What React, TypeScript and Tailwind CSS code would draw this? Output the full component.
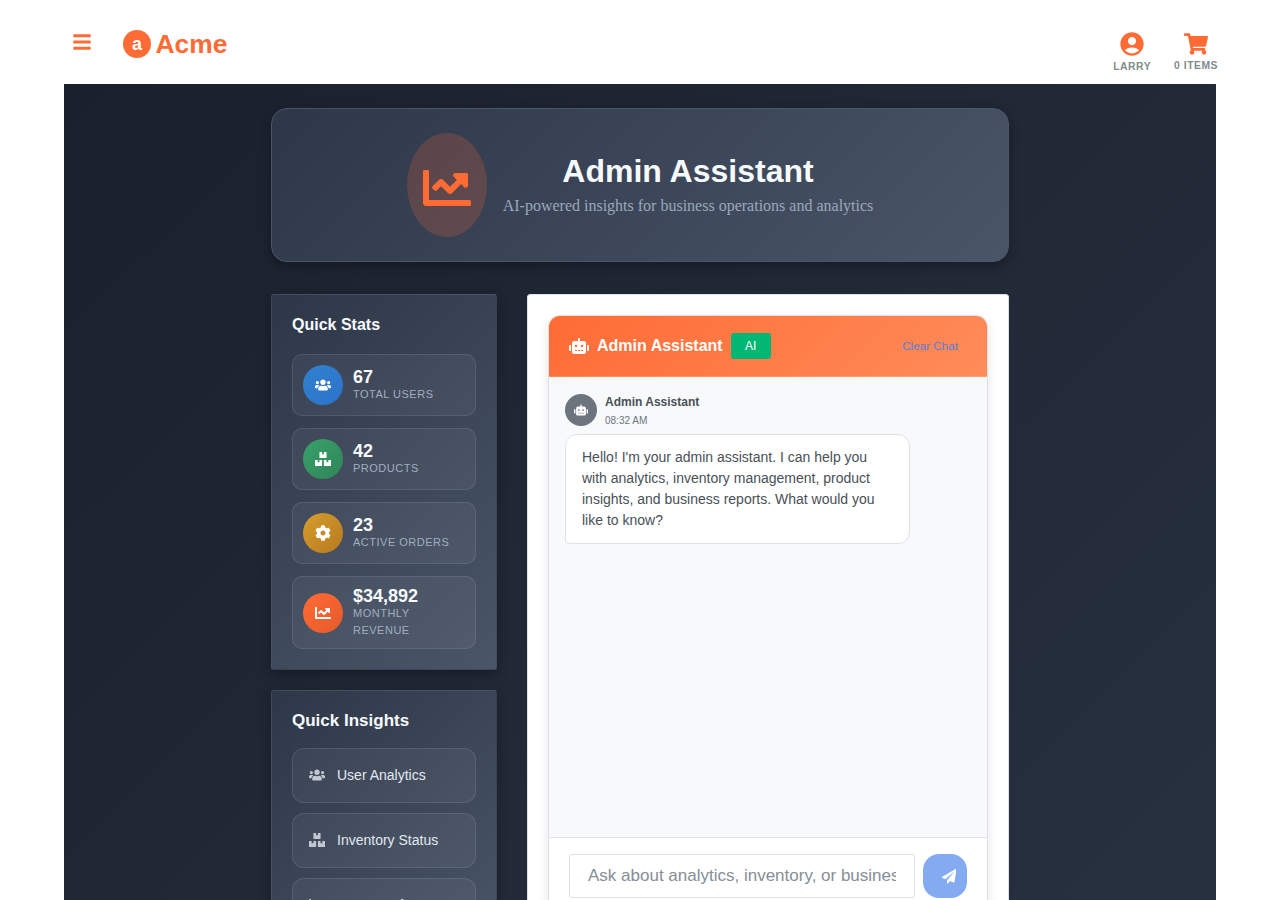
import type { ReactNode } from "react";
import { FaBars, FaBoxes, FaChartLine, FaCog, FaPaperPlane, FaRobot, FaShoppingCart, FaUsers } from "react-icons/fa";
import { MdAccountCircle } from "react-icons/md";

const panel =
  "rounded-[3px] border border-[#4a5568]/30 bg-[linear-gradient(135deg,#2d3748_0%,#4a5568_100%)] p-5 shadow-[0_4px_12px_rgba(0,0,0,0.3)]";

function Stat({ icon, color, value, label }: { icon: ReactNode; color: string; value: string; label: string }) {
  return (
    <div className="flex items-center gap-2.5 rounded-[10px] border border-white/10 bg-white/5 p-2.5">
      <div className={`flex size-10 shrink-0 items-center justify-center rounded-full text-base text-white ${color}`}>{icon}</div>
      <div>
        <div className="text-[18px] leading-none font-bold text-[#f7fafc]">{value}</div>
        <div className="text-[11px] leading-[1.5] tracking-[0.5px] text-[#a0aec0] uppercase">{label}</div>
      </div>
    </div>
  );
}

function Insight({ icon, label }: { icon: ReactNode; label: string }) {
  return (
    <button className="flex h-[55px] w-full items-center gap-3 rounded-xl border border-white/10 bg-white/5 px-4 pb-0.5 text-left text-sm text-[#e2e8f0]">
      <span className="text-base opacity-80">{icon}</span>
      {label}
    </button>
  );
}

export default function App() {
  return (
    <div className="h-[900px] overflow-hidden bg-white font-['Liberation_Sans',Arial,sans-serif]">
      <header className="flex h-[84px] items-start justify-between pr-[62px] pl-[72px] text-[#ff6b35]">
        <div className="flex items-center pt-[30px]">
          <FaBars className="-mt-1 mr-[31px] text-[20px]" />
          <div className="flex items-center gap-[4.5px]">
            <span className="flex size-7 items-center justify-center rounded-full bg-[#ff6b35] text-[18px] leading-none font-bold text-white">a</span>
            <span className="text-[26.4px] leading-7 font-bold">Acme</span>
          </div>
        </div>
        <div className="flex gap-[23px] text-[10.4px] leading-4 font-bold tracking-[0.5px]">
          <div className="flex flex-col items-center pt-[30px]">
            <MdAccountCircle className="mb-px text-[28px]" />
            <span className="text-[#7f8c8d]">LARRY</span>
          </div>
          <div className="flex flex-col items-center pt-8">
            <FaShoppingCart className="mb-[2px] text-[24px]" />
            <span className="text-[#7f8c8d]">0 ITEMS</span>
          </div>
        </div>
      </header>

      <main className="mx-16 h-[1600px] bg-[linear-gradient(135deg,#1a202c_0%,#2d3748_100%)] px-[207px] pt-6">
        <section className="flex h-[154px] items-center justify-center gap-4 rounded-2xl border border-[#4a5568] bg-[linear-gradient(135deg,#2d3748_0%,#4a5568_100%)] shadow-[0_4px_12px_rgba(0,0,0,0.3)]">
          <div className="flex h-[104px] w-20 items-center justify-center rounded-[50%] bg-[#ff6b35]/20 pt-1.5">
            <FaChartLine className="text-[48px] text-[#ff6b35]" />
          </div>
          <div className="text-center">
            <h1 className="text-[32px] leading-[38px] font-bold text-[#f7fafc]">Admin Assistant</h1>
            <p className="mt-1 font-['Liberation_Serif',serif] text-base leading-6 text-[#a0aec0] opacity-95">
              AI-powered insights for business operations and analytics
            </p>
          </div>
        </section>

        <div className="mt-8 grid grid-cols-[226px_482px] items-start gap-[30px]">
          <aside className="flex flex-col gap-5">
            <section className={panel}>
              <h2 className="mb-[19px] h-5 text-base leading-5 font-bold text-[#f7fafc]">Quick Stats</h2>
              <div className="flex flex-col gap-3">
                <Stat icon={<FaUsers />} color="bg-[linear-gradient(135deg,#3182ce,#2c72cb)]" value="67" label="Total Users" />
                <Stat icon={<FaBoxes />} color="bg-[linear-gradient(135deg,#38a169,#2f855a)]" value="42" label="Products" />
                <Stat icon={<FaCog />} color="bg-[linear-gradient(135deg,#d69e2e,#b7791f)]" value="23" label="Active Orders" />
                <Stat icon={<FaChartLine />} color="bg-[linear-gradient(135deg,#ff6b35,#e55a2b)]" value="$34,892" label="Monthly Revenue" />
              </div>
            </section>
            <section className={panel}>
              <h2 className="mb-[17px] h-5 text-[17px] leading-5 font-bold text-[#f7fafc]">Quick Insights</h2>
              <div className="flex flex-col gap-2.5">
                <Insight icon={<FaUsers />} label="User Analytics" />
                <Insight icon={<FaBoxes />} label="Inventory Status" />
                <Insight icon={<FaChartLine />} label="System Info" />
              </div>
            </section>
          </aside>

          <section className="rounded-[3px] border border-[#dee2e6] bg-white p-5">
            <div className="flex h-[602px] flex-col overflow-hidden rounded-xl border border-[#dee2e6] bg-white shadow-[0_4px_12px_rgba(0,0,0,0.1)]">
              <div className="flex h-[61px] shrink-0 items-center border-b border-white/20 bg-[linear-gradient(135deg,#ff6b35_0%,#ff8c5a_100%)] px-5 text-white">
                <FaRobot className="text-[20px]" />
                <span className="ml-2 text-base font-bold">Admin Assistant</span>
                <span className="ml-2 flex h-[26px] w-10 items-center justify-center rounded-[3px] bg-[#00b774] text-xs">AI</span>
                <button className="mr-[9px] ml-auto text-[11.7px] text-[#5580d8]">Clear Chat</button>
              </div>
              <div className="h-[460px] shrink-0 bg-[#f8f9fb] px-4 pt-[17px]">
                <div className="flex gap-2">
                  <div className="flex size-8 items-center justify-center rounded-full bg-[#6c757d] text-sm text-white"><FaRobot /></div>
                  <div>
                    <div className="text-xs leading-[17px] font-bold text-[#495057]">Admin Assistant</div>
                    <div className="mt-[2px] text-[10px] leading-[15px] text-[#6c757d]">08:32 AM</div>
                  </div>
                </div>
                <p className="mt-[6px] w-[345px] rounded-xl rounded-bl-[4px] border border-[#dee2e6] bg-white px-4 py-3 text-sm leading-[21px] text-[#495057]">
                  Hello! I'm your admin assistant. I can help you with analytics, inventory management, product insights, and business reports. What would you like to know?
                </p>
              </div>
              <div className="flex grow gap-2 border-t border-[#dee2e6] px-5 pt-4">
                <input
                  className="h-11 min-w-0 flex-1 rounded-[3px] border border-[#dee2e6] px-[18px] text-[17px] outline-none placeholder:text-[#868e96]"
                  placeholder="Ask about analytics, inventory, or business insights..."
                />
                <button className="flex size-11 items-center justify-center rounded-2xl bg-[#84abf1] pt-px pl-2 text-[14.5px] text-white">
                  <FaPaperPlane />
                </button>
              </div>
            </div>
          </section>
        </div>
      </main>
    </div>
  );
}
